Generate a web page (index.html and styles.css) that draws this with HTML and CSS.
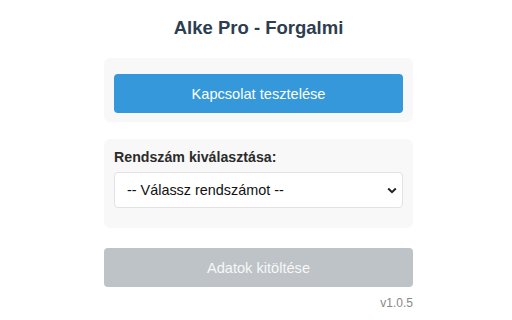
FILE: index.html
```html
<!DOCTYPE html>
<html lang="hu">
<head>
<meta charset="utf-8">
<title>Alke Pro - Forgalmi</title>
<link rel="stylesheet" href="styles.css">
</head>
<body>
<div class="app">
  <h1 class="title">Alke Pro - Forgalmi</h1>
  <div class="card card-test">
    <button class="btn btn-primary" type="button">Kapcsolat tesztelése</button>
  </div>
  <div class="card card-select">
    <label class="label" for="plate">Rendszám kiválasztása:</label>
    <select class="select" id="plate">
      <option>-- Válassz rendszámot --</option>
    </select>
  </div>
  <button class="btn btn-disabled" type="button" disabled>Adatok kitöltése</button>
  <div class="version">v1.0.5</div>
</div>
</body>
</html>
```

FILE: styles.css
```css
html, body {
  margin: 0;
  padding: 0;
  background: #ffffff;
}
body {
  padding-left: 5px;
  font-family: "Liberation Sans", Arial, sans-serif;
}
.app {
  width: 309px;
  margin: 0 auto;
  padding-top: 17px;
  display: flex;
  flex-direction: column;
}
.title {
  margin: 0 0 20px;
  font-size: 18.5px;
  line-height: 21px;
  font-weight: bold;
  text-align: center;
  color: #2c3e50;
}
.card {
  background: #f8f8f8;
  border-radius: 6px;
  display: flex;
  flex-direction: column;
}
.card-test {
  padding: 16px 10px 9px 10px;
  margin-bottom: 17px;
}
.card-select {
  padding: 10px 10px 20px 10px;
  margin-bottom: 20px;
}
.btn {
  height: 39px;
  border: none;
  border-radius: 4px;
  font-family: "Liberation Sans", Arial, sans-serif;
  font-size: 14.6px;
  color: #ffffff;
  padding: 0;
}
.btn-primary {
  background: #3498db;
}
.btn-disabled {
  background: #bdc3c7;
  color: #f7f8f9;
}
.label {
  font-size: 14.2px;
  line-height: 17px;
  font-weight: bold;
  color: #2b2b2b;
  margin-bottom: 6px;
}
.select {
  -webkit-appearance: none;
  appearance: none;
  height: 36px;
  border: 1px solid #e2e2e2;
  border-radius: 4px;
  background-color: #ffffff;
  background-image: url("data:image/svg+xml,%3Csvg xmlns='http://www.w3.org/2000/svg' width='10' height='7' viewBox='0 0 10 7'%3E%3Cpath d='M1.2 1.5 5 5.2 8.8 1.5' fill='none' stroke='%23222' stroke-width='2'/%3E%3C/svg%3E");
  background-repeat: no-repeat;
  background-position: right 5px center;
  background-size: 10px 7px;
  font-family: "Liberation Sans", Arial, sans-serif;
  font-size: 14.4px;
  color: #111111;
  padding: 0 24px 0 12px;
}
.version {
  margin-top: 9px;
  text-align: right;
  font-size: 12px;
  line-height: 14px;
  color: #888888;
}
```
